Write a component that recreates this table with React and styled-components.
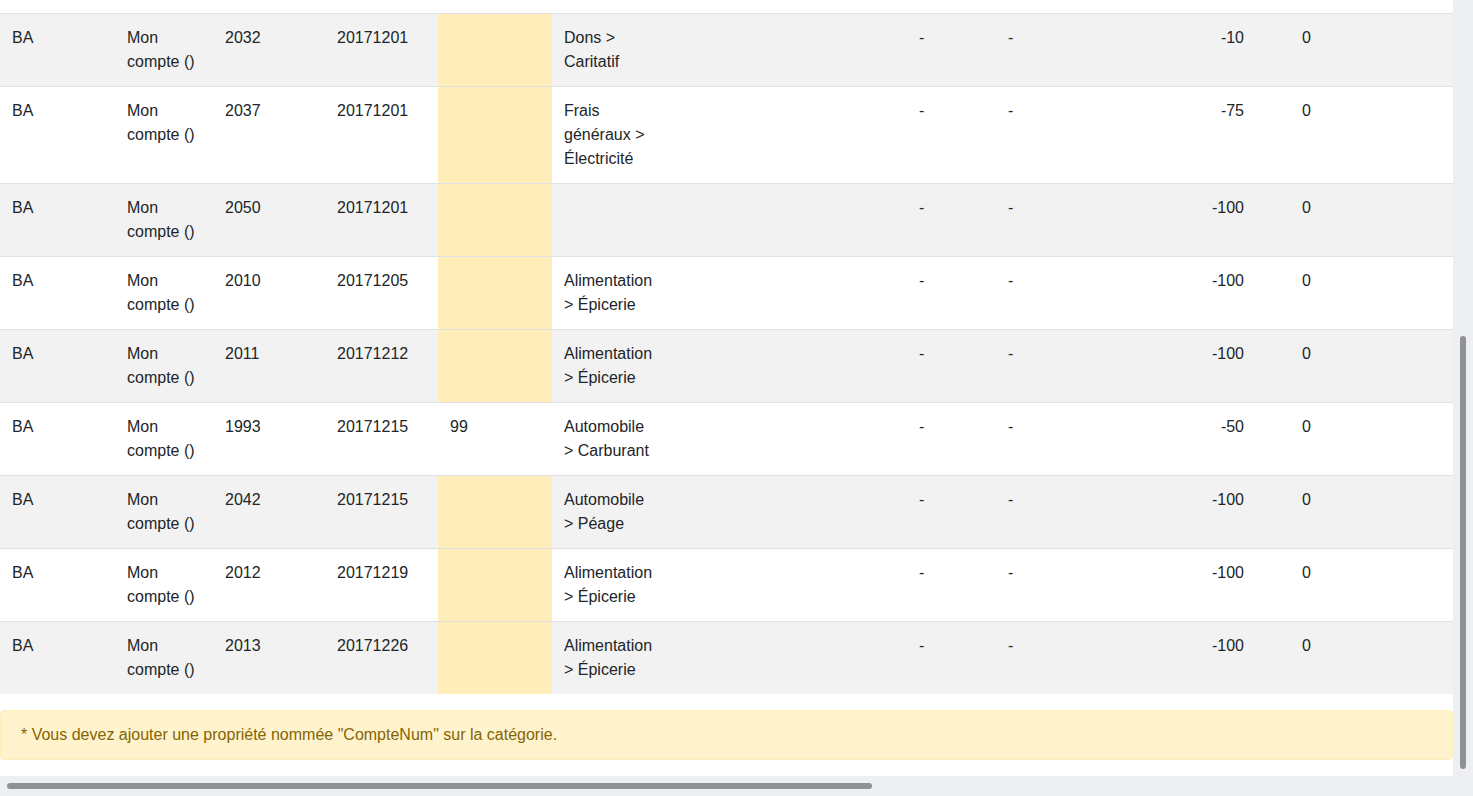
import React, { useLayoutEffect, useRef, useState } from "react";
import styled, { createGlobalStyle } from "styled-components";

const GlobalStyle = createGlobalStyle`
  html, body { margin: 0; padding: 0; background: #fff; overflow: hidden; }
  body {
    font-family: "Liberation Sans", Arial, sans-serif;
    font-size: 16px;
    line-height: 1.5;
    color: #212529;
  }
`;

const TRACK = 20;

const Frame = styled.div`
  display: grid;
  grid-template-columns: 1fr ${TRACK}px;
  grid-template-rows: 1fr ${TRACK}px;
  width: 100vw;
  height: 100vh;
  background: #eeeff1;
  overflow: hidden;
`;

const Viewport = styled.div`
  overflow: hidden;
  background: #fff;
  min-width: 0;
  min-height: 0;
`;

const VTrack = styled.div`
  display: flex;
  flex-direction: column;
  align-items: center;
  background: #eeeff1;
`;

const HTrack = styled.div`
  display: flex;
  align-items: center;
  background: #eeeff1;
`;

const Thumb = styled.div`
  flex: none;
  background: #909193;
  border-radius: 3px;
  width: ${(p) => (p.$vertical ? "6px" : "auto")};
  height: ${(p) => (p.$vertical ? "auto" : "6px")};
`;

const Page = styled.div`
  padding-bottom: 16px;
`;

const Title = styled.h4`
  margin: 0;
  padding: 10px 12px 8px;
  font-size: 24px;
  line-height: 29px;
  font-weight: 500;
`;

const Table = styled.table`
  width: 2402px;
  table-layout: fixed;
  border-collapse: collapse;
  margin-bottom: 16px;
`;

const Col = styled.col`
  width: ${(p) => p.$w}px;
`;

const HeadCell = styled.th`
  padding: 12px;
  text-align: ${(p) => p.$align || "left"};
  vertical-align: bottom;
  font-weight: 700;
  border-top: 1px solid #dee2e6;
  border-bottom: 2px solid #dee2e6;
  white-space: nowrap;
  overflow: hidden;
  text-overflow: clip;
`;

const Row = styled.tr`
  &:nth-of-type(odd) {
    background-color: #f2f2f2;
  }
`;

const Cell = styled.td`
  padding: 12px;
  vertical-align: top;
  border-top: 1px solid #dee2e6;
  text-align: ${(p) => p.$align || "left"};
  background-color: ${(p) => (p.$warn ? "#ffeeba" : "transparent")};
`;

const Alert = styled.div`
  padding: 12px 20px;
  border: 1px solid #ffeeba;
  border-radius: 4px;
  background: #fff3cd;
  color: #856404;
`;

const COLUMNS = [
  { key: "journal", title: "Code", width: 115 },
  { key: "journalLib", title: "Journal", width: 98 },
  { key: "num", title: "N°", width: 112 },
  { key: "date", title: "Date", width: 113 },
  { key: "compte", title: "Compte *", width: 114, warnIfEmpty: true },
  { key: "cat", title: "Libellé", width: 114 },
  { key: "ecrLib", title: "Écriture", width: 241 },
  { key: "auxNum", title: "Aux.", width: 89 },
  { key: "auxLib", title: "Lib.", width: 89 },
  { key: "montant", title: "Débit", width: 171, align: "right" },
  { key: "spacer", title: "", width: 34 },
  { key: "credit", title: "Crédit", width: 112 },
  { key: "pieceRef", title: "PieceRef", width: 200 },
  { key: "pieceDate", title: "PieceDate", width: 200 },
  { key: "let", title: "EcritureLet", width: 200 },
  { key: "valid", title: "ValidDate", width: 200 },
  { key: "devise", title: "Idevise", width: 200 },
];

const mk = (num, date, compte, cat, montant) => ({
  journal: "BA",
  journalLib: "Mon compte ()",
  num,
  date,
  compte,
  cat,
  ecrLib: "",
  auxNum: "-",
  auxLib: "-",
  montant,
  spacer: "",
  credit: "0",
  pieceRef: "",
  pieceDate: "",
  let: "",
  valid: "",
  devise: "",
});

const ROWS = [
  mk("2001", "20171103", "", "Alimentation > Épicerie", "-100"),
  mk("2036", "20171104", "", "Frais généraux > Électricité", "-75"),
  mk("2002", "20171110", "", "Alimentation > Épicerie", "-100"),
  mk("2041", "20171115", "", "Automobile > Péage", "-100"),
  mk("2040", "20171120", "", "Frais généraux > Électricité", "-60"),
  mk("1992", "20171124", "99", "Automobile > Carburant", "-50"),
  mk("2032", "20171201", "", "Dons > Caritatif", "-10"),
  mk("2037", "20171201", "", "Frais généraux > Électricité", "-75"),
  mk("2050", "20171201", "", "", "-100"),
  mk("2010", "20171205", "", "Alimentation > Épicerie", "-100"),
  mk("2011", "20171212", "", "Alimentation > Épicerie", "-100"),
  mk("1993", "20171215", "99", "Automobile > Carburant", "-50"),
  mk("2042", "20171215", "", "Automobile > Péage", "-100"),
  mk("2012", "20171219", "", "Alimentation > Épicerie", "-100"),
  mk("2013", "20171226", "", "Alimentation > Épicerie", "-100"),
];

const INSET = 7;

export default function App() {
  const viewRef = useRef(null);
  const [m, setM] = useState(null);

  useLayoutEffect(() => {
    const el = viewRef.current;
    if (!el) return;
    el.scrollTop = el.scrollHeight;
    el.scrollLeft = 0;
    setM({
      sh: el.scrollHeight,
      ch: el.clientHeight,
      st: el.scrollTop,
      sw: el.scrollWidth,
      cw: el.clientWidth,
      sl: el.scrollLeft,
    });
  }, []);

  const vThumb = m
    ? {
        height: Math.max(0, (m.ch / m.sh) * m.ch - INSET * 2),
        marginTop: (m.st / m.sh) * m.ch + INSET,
      }
    : { height: 0 };
  const hThumb = m
    ? {
        width: Math.max(0, (m.cw / m.sw) * m.cw - INSET * 2),
        marginLeft: (m.sl / m.sw) * m.cw + INSET,
      }
    : { width: 0 };

  return (
    <Frame>
      <GlobalStyle />
      <Viewport ref={viewRef}>
        <Page>
          <Title>Export FEC</Title>
          <Table>
            <colgroup>
              {COLUMNS.map((c) => (
                <Col key={c.key} $w={c.width} />
              ))}
            </colgroup>
            <thead>
              <tr>
                {COLUMNS.map((c) => (
                  <HeadCell key={c.key} $align={c.align}>
                    {c.title}
                  </HeadCell>
                ))}
              </tr>
            </thead>
            <tbody>
              {ROWS.map((r) => (
                <Row key={r.num}>
                  {COLUMNS.map((c) => (
                    <Cell
                      key={c.key}
                      $align={c.align}
                      $warn={c.warnIfEmpty && !r[c.key]}
                    >
                      {r[c.key]}
                    </Cell>
                  ))}
                </Row>
              ))}
            </tbody>
          </Table>
          <Alert>
            * Vous devez ajouter une propriété nommée "CompteNum" sur la
            catégorie.
          </Alert>
        </Page>
      </Viewport>
      <VTrack>
        <Thumb $vertical style={vThumb} />
      </VTrack>
      <HTrack>
        <Thumb style={hThumb} />
      </HTrack>
    </Frame>
  );
}
